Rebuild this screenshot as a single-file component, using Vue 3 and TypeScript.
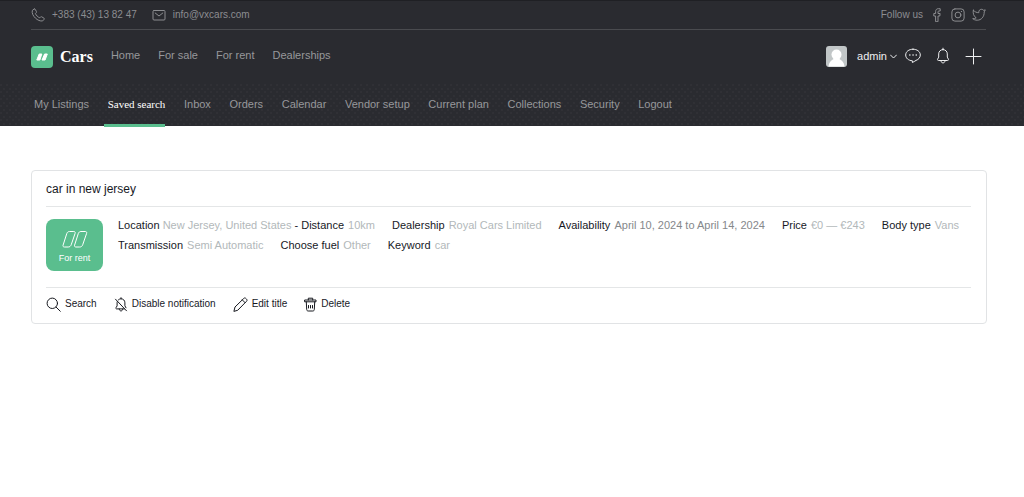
<script setup lang="ts">
interface Criterion {
  label: string
  value: string
  dark?: boolean
  extra?: { label: string; value: string }
}

const mainLinks: string[] = ['Home', 'For sale', 'For rent', 'Dealerships']

const accountLinks: string[] = [
  'My Listings',
  'Saved search',
  'Inbox',
  'Orders',
  'Calendar',
  'Vendor setup',
  'Current plan',
  'Collections',
  'Security',
  'Logout',
]
const current = 'Saved search'

const criteria: Criterion[] = [
  { label: 'Location', value: 'New Jersey, United States', extra: { label: 'Distance', value: '10km' } },
  { label: 'Dealership', value: 'Royal Cars Limited' },
  { label: 'Availability', value: 'April 10, 2024 to April 14, 2024', dark: true },
  { label: 'Price', value: '€0 — €243' },
  { label: 'Body type', value: 'Vans' },
  { label: 'Transmission', value: 'Semi Automatic' },
  { label: 'Choose fuel', value: 'Other' },
  { label: 'Keyword', value: 'car' },
]
</script>

<template>
  <div class="page">
    <header class="header">
      <div class="topbar">
        <a class="contact" href="#">
          <svg class="line" width="14" height="14" viewBox="0 0 14 14">
            <path d="M3.1 1.1 1.4 2.3C.5 5 2.2 8 4.4 10.1c2.200 2 4.800 3.300 7.300 2.800l1.500-1.700c.2-.4.1-.8-.3-1.100L10.700 8.800c-.4-.2-.8-.2-1.100.1l-.9.9C7 9.200 5 7.300 4.400 5.500l.9-.9c.3-.3.3-.7.100-1.100L4.200 1.300c-.3-.4-.7-.4-1.100-.2Z" />
          </svg>
          <span>+383 (43) 13 82 47</span>
        </a>
        <a class="contact" href="#">
          <svg class="line" width="14" height="14" viewBox="0 0 14 14">
            <rect x="1" y="2.500" width="12" height="9.500" rx="1" />
            <path d="m3.200 5 3.800 3 3.800-3" />
          </svg>
          <span>info@vxcars.com</span>
        </a>
        <div class="social">
          <span>Follow us</span>
          <a href="#" aria-label="Facebook">
            <svg class="line" width="14" height="14" viewBox="0 0 14 14">
              <path d="M5.600 13.300V8H3.800V5.500h1.800V3.600c0-1.800 1-2.900 2.700-2.900h1.900V3H8.900c-.6 0-.9.3-.9.900v1.600h2.100L9.800 8H8v5.300Z" />
            </svg>
          </a>
          <a href="#" aria-label="Instagram">
            <svg class="line" width="14" height="14" viewBox="0 0 14 14">
              <rect x=".9" y=".9" width="12.200" height="12.200" rx="3" />
              <circle cx="7" cy="7" r="2.900" />
              <path d="M10.300 3.500h.4" />
            </svg>
          </a>
          <a href="#" aria-label="Twitter">
            <svg class="line" width="14" height="14" viewBox="0 0 14 14">
              <path d="M1.300 2.200c1.500 1.700 3.300 2.500 5.500 2.500-.2-2.200 1-3.400 2.700-3.400.9 0 1.600.4 2.100 1l1.700-.4-1.100 2c.2 4.800-2.900 8.300-7 8.300-1.800 0-3.300-.5-4.500-1.500 1.500.1 2.600-.2 3.500-.9C1.800 8.600.7 5.300 1.300 2.200Z" />
            </svg>
          </a>
        </div>
      </div>

      <div class="mainbar">
        <a class="brand" href="#">
          <svg width="22" height="22" viewBox="0 0 22 22">
            <rect width="22" height="22" rx="4" fill="#5abe8e" />
            <path d="M8.200 8h2.600L8.900 14H5.800ZM13.600 8h2.700l-2.200 6h-3.100Z" fill="#fff" stroke="#fff" stroke-width="1" stroke-linejoin="round" />
          </svg>
          <span>Cars</span>
        </a>
        <nav class="mainnav" aria-label="Main">
          <a v-for="link in mainLinks" :key="link" href="#">{{ link }}</a>
        </nav>
        <div class="user">
          <button class="account" type="button">
            <svg width="21" height="21" viewBox="0 0 21 21">
              <rect width="21" height="21" rx="3" fill="#c1c6c7" />
              <circle cx="10.500" cy="8.600" r="5" fill="#fff" />
              <path d="M2.500 20.500c.5-4.500 3-6.500 5.200-7.500h5.600c2.200 1 4.700 3 5.200 7.500Z" fill="#fff" />
            </svg>
            <span>admin</span>
            <svg class="chevron" width="7" height="7" viewBox="0 0 7 7"><path d="m.5 2 3 3 3-3" /></svg>
          </button>
          <button class="tool" type="button" aria-label="Messages">
            <svg width="18" height="18" viewBox="0 0 18 18">
              <path d="M9 2.200c4.300 0 7.300 2.500 7.300 5.800 0 2.500-1.700 4.500-4.300 5.400-1.300.5-2.300 1.800-3.600 2.100v-1.700C4.400 13.500 1.700 11.200 1.700 8c0-3.300 3-5.800 7.300-5.800Z" />
              <path class="dots" d="M5.800 8h.1M9 8h.1M12.200 8h.1" />
            </svg>
          </button>
          <button class="tool" type="button" aria-label="Notifications">
            <svg width="18" height="18" viewBox="0 0 18 18">
              <path d="M9 1.200v1.400M9 2.600c-2.500 0-4.300 1.800-4.300 4.300v3.200l-1.100 2.100c-.3.700 0 1.300.8 1.300h9.200c.8 0 1.100-.6.800-1.300l-1.100-2.100V6.900c0-2.500-1.800-4.300-4.300-4.300ZM6.900 13.500c.1 1.600.9 2.400 2.100 2.400s2-.8 2.100-2.400" />
            </svg>
          </button>
          <button class="tool" type="button" aria-label="Add listing">
            <svg width="18" height="18" viewBox="0 0 18 18"><path d="M9.500 2v15M2 9.500h15" /></svg>
          </button>
        </div>
      </div>

      <nav class="subnav" aria-label="Account">
        <div class="tabs">
          <a v-for="link in accountLinks" :key="link" href="#" :class="{ active: link === current }">{{ link }}</a>
        </div>
      </nav>
    </header>

    <main class="content">
      <article class="card">
        <h2 class="title">car in new jersey</h2>
        <div class="body">
          <div class="type">
            <svg width="26" height="20" viewBox="0 0 26 20">
              <path d="M7.500 1.500h4.300c1.200 0 1.700.8 1.300 1.900L9.200 14.800c-.6 1.500-1.600 2.200-3 2.200H2.400c-1.200 0-1.700-.8-1.300-1.900L4.800 3.500c.5-1.300 1.400-2 2.700-2ZM19 1.500h4.300c1.200 0 1.700.8 1.300 1.900l-3.900 11.400c-.6 1.500-1.600 2.200-3 2.200h-3.800c-1.200 0-1.700-.8-1.300-1.900l3.700-11.600c.5-1.300 1.400-2 2.700-2Z" />
            </svg>
            <span>For rent</span>
          </div>
          <ul class="criteria">
            <li v-for="item in criteria" :key="item.label">
              <b>{{ item.label }}</b> <span :class="{ dark: item.dark }">{{ item.value }}</span>
              <template v-if="item.extra"><b> - {{ item.extra.label }}</b> <span>{{ item.extra.value }}</span></template>
            </li>
          </ul>
        </div>
        <div class="actions">
          <button type="button">
            <svg width="15" height="15" viewBox="0 0 15 15"><circle cx="6.300" cy="6.300" r="5.200" /><path d="m10.100 10.100 4.200 4.200" /></svg>
            <span>Search</span>
          </button>
          <button type="button">
            <svg width="14" height="15" viewBox="0 0 14 15">
              <path d="m1.500 2.200 11 11.600M4.300 3C5 2.200 6 1.800 7 1.800c2.300 0 3.900 1.700 3.900 4v3l1.100 2M3.300 4.500c-.2.500-.2.900-.2 1.300v3.100L2 10.700c-.4.700 0 1.200.7 1.200h7.700M7 .7v1.100M5.300 12c.1 1.200.7 1.900 1.700 1.900s1.600-.7 1.700-1.900" />
            </svg>
            <span>Disable notification</span>
          </button>
          <button type="button">
            <svg width="15" height="15" viewBox="0 0 15 15">
              <path d="m1 14 1-4L10.700 1.500c.7-.7 1.500-.7 2.200 0l.6.6c.7.700.7 1.500 0 2.200L5 13ZM9.300 2.900l2.800 2.800" />
            </svg>
            <span>Edit title</span>
          </button>
          <button type="button">
            <svg width="13" height="15" viewBox="0 0 13 15">
              <path d="M1 3h11v1.800H1ZM4.300 3V1.200h4.400V3M2.300 4.800l.4 7.700c.1 1 .6 1.500 1.500 1.500h4.600c.9 0 1.400-.5 1.500-1.500l.4-7.700M4.500 8.500V11M6.500 8.500V11M8.500 8.500V11" />
            </svg>
            <span>Delete</span>
          </button>
        </div>
      </article>
    </main>
  </div>
</template>

<style>
body {
  background: #fff;
}
</style>

<style scoped>
.page {
  font: 11px/20px "Liberation Sans", Arial, sans-serif;
  color: #17191f;
}
a {
  color: inherit;
  text-decoration: none;
}
button {
  display: flex;
  align-items: center;
  padding: 0;
  border: 0;
  background: none;
  color: inherit;
  font: inherit;
  cursor: pointer;
}
svg {
  display: block;
  flex: none;
}
.header {
  background: #2a2b30;
  border-top: 1px solid #1f2024;
  color: #97989b;
}
.topbar {
  display: flex;
  align-items: center;
  gap: 15px;
  height: 28px;
  margin: 0 38px 0 31px;
  border-bottom: 1px solid #4a4b4f;
  color: #8c8d90;
  font-size: 10px;
}
.contact,
.social {
  display: flex;
  align-items: center;
  gap: 7px;
}
.social {
  margin-left: auto;
}
.line {
  fill: none;
  stroke: currentColor;
  stroke-linecap: round;
  stroke-linejoin: round;
}
.mainbar {
  display: flex;
  align-items: center;
  height: 54px;
  padding: 0 38px 0 31px;
}
.brand {
  display: flex;
  align-items: center;
  gap: 7px;
  color: #fff;
  font: bold 16px/20px "Liberation Serif", "Times New Roman", serif;
}
.mainnav {
  display: flex;
  gap: 18px;
  margin-left: 18px;
  padding-bottom: 4px;
}
.user {
  display: flex;
  align-items: center;
  gap: 12px;
  margin-left: auto;
  padding: 0 4px 2px 0;
  color: #eeeff0;
}
.account span {
  margin: 0 3px 0 10px;
}
.account {
  margin-right: -5px;
}
.tool svg,
.chevron {
  fill: none;
  stroke: currentColor;
  stroke-linecap: round;
  stroke-linejoin: round;
}
.tool .dots {
  stroke-width: 1.5;
}
.subnav {
  padding: 0 30px;
  background-image:
    radial-gradient(circle at 1px 1px, #3d3e42 0, transparent 1px),
    radial-gradient(circle at 4px 5px, #3d3e42 0, transparent 1px);
  background-size: 6px 7px;
}
.tabs {
  display: flex;
  align-items: flex-start;
  justify-content: space-between;
  max-width: 642px;
  height: 42px;
}
.tabs a {
  padding: 10px 0 10px 4px;
}
.tabs a.active {
  border-bottom: 3px solid #5abe8e;
  color: #fff;
  font-family: "Liberation Serif", "Times New Roman", serif;
}
.content {
  padding: 44px 37px 44px 31px;
}
.card {
  padding: 0 15px 0 14px;
  border: 1px solid #e1e3e5;
  border-radius: 4px;
}
.title {
  margin: 0;
  padding: 8px 0 7px;
  border-bottom: 1px solid #e4e6e7;
  font-size: 12px;
  font-weight: 400;
}
.body {
  display: flex;
  align-items: flex-start;
  gap: 15px;
  padding: 12px 0 16px;
  border-bottom: 1px solid #e4e6e7;
}
.type {
  display: flex;
  flex: none;
  flex-direction: column;
  align-items: center;
  width: 57px;
  padding: 11px 0 5px;
  border-radius: 8px;
  background: #5abe8e;
  color: #fff;
  font-size: 9px;
  line-height: 16px;
}
.type svg {
  fill: none;
  stroke: #fff;
}
.criteria {
  display: flex;
  flex-wrap: wrap;
  column-gap: 17px;
  margin: -4px 0 0;
  padding: 0;
  list-style: none;
}
.criteria b {
  font-weight: 400;
  color: #17191f;
}
.criteria span {
  color: #b2b8ba;
}
.criteria span:last-child {
  margin-left: 1px;
}
.criteria .dark {
  color: #85888b;
}
.actions {
  display: flex;
  gap: 17px;
  padding: 6px 0 9px;
  font-size: 10px;
}
.actions button {
  gap: 4px;
}
.actions svg {
  fill: none;
  stroke: currentColor;
  stroke-linecap: round;
  stroke-linejoin: round;
}
</style>
